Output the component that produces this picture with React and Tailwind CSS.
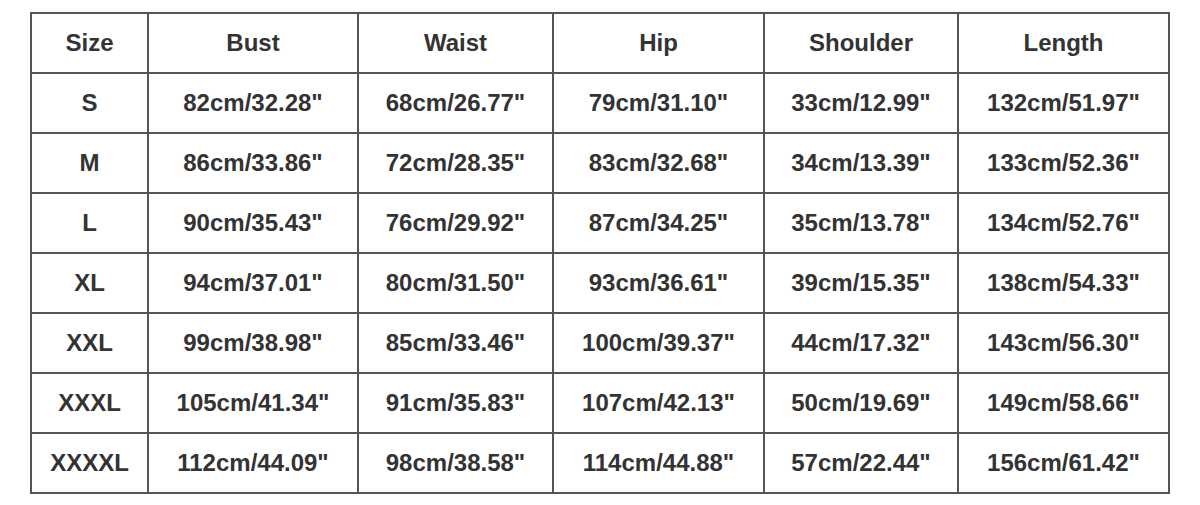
const headers = ['Size', 'Bust', 'Waist', 'Hip', 'Shoulder', 'Length'];

const rows = [
  ['S', '82cm/32.28"', '68cm/26.77"', '79cm/31.10"', '33cm/12.99"', '132cm/51.97"'],
  ['M', '86cm/33.86"', '72cm/28.35"', '83cm/32.68"', '34cm/13.39"', '133cm/52.36"'],
  ['L', '90cm/35.43"', '76cm/29.92"', '87cm/34.25"', '35cm/13.78"', '134cm/52.76"'],
  ['XL', '94cm/37.01"', '80cm/31.50"', '93cm/36.61"', '39cm/15.35"', '138cm/54.33"'],
  ['XXL', '99cm/38.98"', '85cm/33.46"', '100cm/39.37"', '44cm/17.32"', '143cm/56.30"'],
  ['XXXL', '105cm/41.34"', '91cm/35.83"', '107cm/42.13"', '50cm/19.69"', '149cm/58.66"'],
  ['XXXXL', '112cm/44.09"', '98cm/38.58"', '114cm/44.88"', '57cm/22.44"', '156cm/61.42"'],
];

export default function App() {
  return (
    <div className="w-[1200px] h-[505px] bg-white pt-[12px] pl-[30px]" style={{ fontFamily: '"Liberation Sans", Arial, sans-serif' }}>
      <div className="inline-grid grid-cols-[115px_208px_193px_209px_192px_209px] auto-rows-[58px] gap-[2px] p-[2px] bg-[#555555]">
        {headers.map((h) => (
          <div key={h} className="bg-white flex items-center justify-center text-[24px] font-bold text-[#333333]">
            {h}
          </div>
        ))}
        {rows.map((row) =>
          row.map((cell, i) => (
            <div key={row[0] + i} className="bg-white flex items-center justify-center text-[24px] font-bold text-[#333333]">
              {cell}
            </div>
          ))
        )}
      </div>
    </div>
  );
}
